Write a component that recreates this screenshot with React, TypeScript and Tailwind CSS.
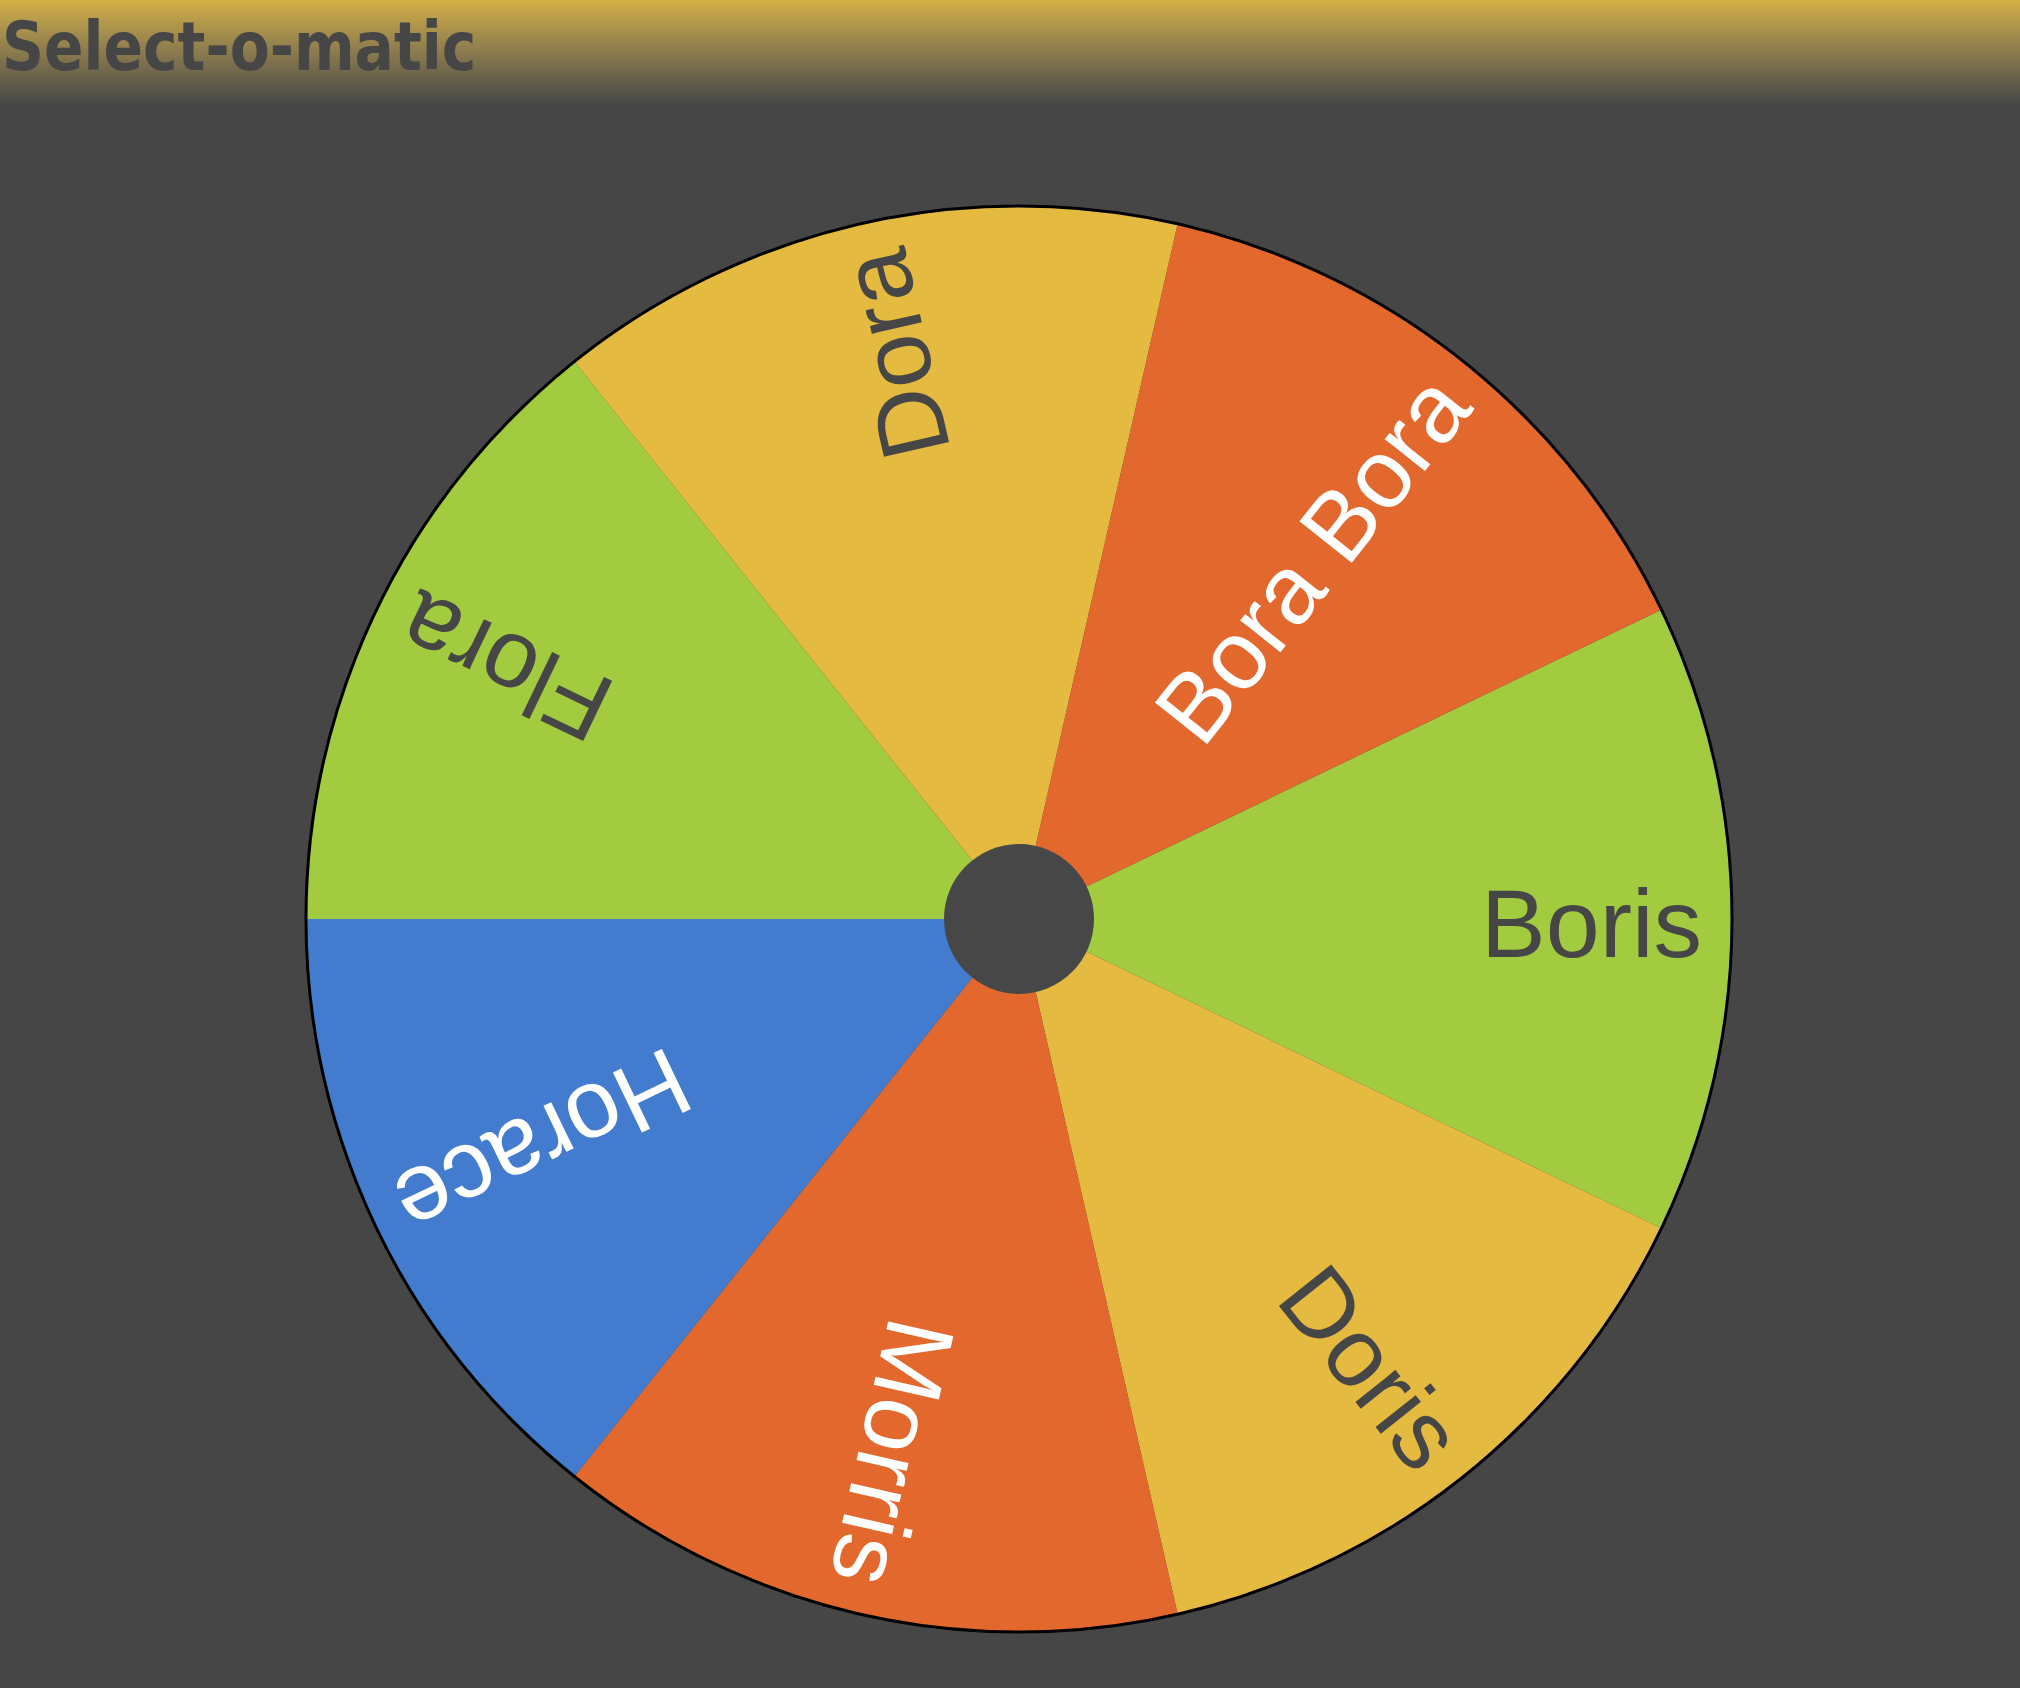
import React from 'react';

const R = 713;
const slices = [
    { name: 'Boris', fill: '#a2cb40', text: '#464646' },
    { name: 'Doris', fill: '#e5ba40', text: '#464646' },
    { name: 'Morris', fill: '#e2682d', text: '#ffffff' },
    { name: 'Horace', fill: '#437cce', text: '#ffffff' },
    { name: 'Flora', fill: '#a2cb40', text: '#464646' },
    { name: 'Dora', fill: '#e5ba40', text: '#464646' },
    { name: 'Bora Bora', fill: '#e2682d', text: '#ffffff' },
];

function pt(deg: number, r: number) {
    const a = (deg * Math.PI) / 180;
    return `${(Math.cos(a) * r).toFixed(2)} ${(Math.sin(a) * r).toFixed(2)}`;
}

function Wheel() {
    const step = 360 / slices.length;
    return (
        <svg width={1430} height={1430} viewBox="-715 -715 1430 1430">
            {slices.map((s, i) => {
                const mid = i * step;
                const a0 = mid - step / 2;
                const a1 = mid + step / 2;
                return (
                    <path
                        key={s.name}
                        d={`M 0 0 L ${pt(a0, R)} A ${R} ${R} 0 0 1 ${pt(a1, R)} Z`}
                        fill={s.fill}
                    />
                );
            })}
            <circle cx={0} cy={0} r={R} fill="none" stroke="#000" strokeWidth={3} />
            {slices.map((s, i) => (
                <text
                    key={s.name}
                    transform={`rotate(${i * step})`}
                    x={683}
                    y={38}
                    textAnchor="end"
                    fontSize={97}
                    fontFamily="'Liberation Sans', Arial, sans-serif"
                    fill={s.text}
                >
                    {s.name}
                </text>
            ))}
            <circle cx={0} cy={0} r={75} fill="#474747" />
        </svg>
    );
}

export default function App() {
    return (
        <div className="min-h-screen bg-[#464646] overflow-hidden">
            {/* Title bar */}
            <header className="h-[105px] bg-gradient-to-b from-[#d4b044] to-[#474747] pt-[14px] pl-[2px]">
                <h1
                    className="text-[67px] leading-none font-bold text-[#464646] origin-left scale-x-[0.87] whitespace-nowrap"
                    style={{ fontFamily: "'DejaVu Sans', Verdana, sans-serif" }}
                >
                    Select-o-matic
                </h1>
            </header>

            {/* Wheel */}
            <main className="flex justify-center pt-[99px] pl-[17px]">
                <Wheel />
            </main>
        </div>
    );
}
